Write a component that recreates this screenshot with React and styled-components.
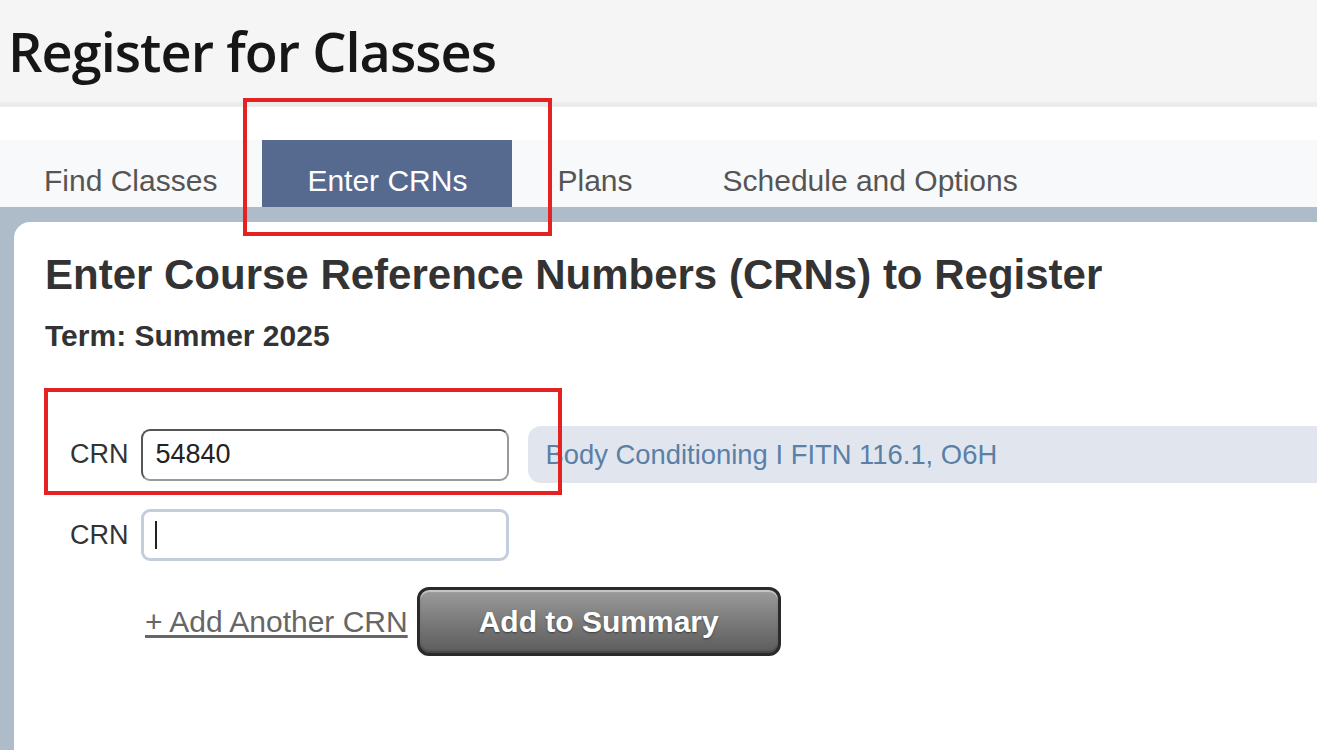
import React from 'react';
import styled, { createGlobalStyle } from 'styled-components';

const GlobalStyle = createGlobalStyle`
  html, body {
    margin: 0;
    padding: 0;
    height: 100%;
  }
  body {
    font-family: "Liberation Sans", Arial, sans-serif;
    background: #ffffff;
    overflow: hidden;
  }
  #root {
    min-height: 100%;
  }
`;

const tabs = ['Find Classes', 'Enter CRNs', 'Plans', 'Schedule and Options'];

export default function App() {
  return (
    <Page>
      <GlobalStyle />
      <Header>
        <Title>Register for Classes</Title>
      </Header>
      <Spacer />
      <TabBar>
        {tabs.map((t) => (
          <Tab key={t} $active={t === 'Enter CRNs'}>{t}</Tab>
        ))}
      </TabBar>
      <Main>
        <Panel>
          <Heading>Enter Course Reference Numbers (CRNs) to Register</Heading>
          <Term>Term: Summer 2025</Term>

          <CrnRow $first>
            <Label>CRN</Label>
            <CrnInput defaultValue="54840" />
            <CourseInfo>Body Conditioning I FITN 116.1, O6H</CourseInfo>
          </CrnRow>
          <CrnRow>
            <Label>CRN</Label>
            <InputWrap>
              <CrnInput $focused defaultValue="" />
              <Caret />
            </InputWrap>
          </CrnRow>

          <Actions>
            <AddLink href="#">+ Add Another CRN</AddLink>
            <SummaryButton>Add to Summary</SummaryButton>
          </Actions>
        </Panel>
      </Main>

      <Highlight style={{ left: 243, top: 98, width: 309, height: 138 }} />
      <Highlight style={{ left: 44, top: 388, width: 518, height: 107 }} />
    </Page>
  );
}

const Page = styled.div`
  position: relative;
  min-height: 100vh;
  display: flex;
  flex-direction: column;
`;

const Header = styled.header`
  height: 102px;
  background: #f5f5f5;
  border-bottom: 5px solid #ececec;
  display: flex;
  align-items: center;
  padding-left: 8px;
`;

const Title = styled.h1`
  margin: 0;
  font-family: "Open Sans", "Noto Sans", sans-serif;
  font-weight: 600;
  font-size: 54px;
  letter-spacing: -0.95px;
  line-height: normal;
  color: #161616;
`;

const Spacer = styled.div`
  height: 33px;
  background: #ffffff;
`;

const TabBar = styled.nav`
  display: flex;
  height: 67px;
  background: #f8f9fb;
`;

const Tab = styled.div`
  box-sizing: border-box;
  height: 67px;
  padding: 24px 45px 0;
  font-size: 30px;
  line-height: 34px;
  white-space: nowrap;
  color: ${(p) => (p.$active ? '#ffffff' : '#555555')};
  background: ${(p) => (p.$active ? '#566a8f' : 'transparent')};

  &:first-child {
    padding-left: 44px;
  }
`;

const Main = styled.main`
  flex: 1;
  display: flex;
  background: #aebbc9;
  padding: 15px 0 0 14px;
`;

const Panel = styled.section`
  flex: 1;
  background: #ffffff;
  border-top-left-radius: 16px;
  padding: 29px 0 0 31px;
`;

const Heading = styled.h2`
  margin: 0;
  font-size: 42px;
  font-weight: 700;
  line-height: 48px;
  color: #333333;
  white-space: nowrap;
`;

const Term = styled.h3`
  margin: 20px 0 0;
  font-size: 30px;
  font-weight: 700;
  line-height: 34px;
  color: #333333;
`;

const CrnRow = styled.div`
  display: flex;
  align-items: center;
  margin-top: ${(p) => (p.$first ? '73px' : '26px')};
  padding-left: 25px;
  min-height: 52px;
`;

const Label = styled.span`
  font-size: 27px;
  color: #333333;
  margin-right: 12px;
`;

const InputWrap = styled.div`
  position: relative;
  display: flex;
`;

const CrnInput = styled.input`
  box-sizing: border-box;
  width: 368px;
  height: 52px;
  padding: 0 13px;
  font-family: "Liberation Sans", Arial, sans-serif;
  font-size: 27px;
  color: #222222;
  background: #ffffff;
  border-radius: 9px;
  outline: none;
  border: ${(p) => (p.$focused ? '3px solid #c3cddb' : '2px solid')};
  border-color: ${(p) => (p.$focused ? '#c3cddb' : '#555555 #9a9a9a #9a9a9a #555555')};
`;

const Caret = styled.span`
  position: absolute;
  left: 14px;
  top: 12px;
  width: 2px;
  height: 28px;
  background: #222222;
`;

const CourseInfo = styled.div`
  flex: 1;
  margin-left: 19px;
  height: 57px;
  display: flex;
  align-items: center;
  padding-left: 18px;
  background: #e1e6ee;
  border-radius: 13px 0 0 13px;
  font-size: 27.4px;
  color: #5a80a8;
  white-space: nowrap;
`;

const Actions = styled.div`
  display: flex;
  align-items: center;
  margin-top: 26px;
  padding-left: 100px;
`;

const AddLink = styled.a`
  font-size: 30px;
  color: #666666;
  text-decoration: underline;
  text-underline-offset: 3px;
  margin-right: 9px;
`;

const SummaryButton = styled.button`
  box-sizing: border-box;
  width: 364px;
  height: 69px;
  border: 3px solid #2a2a2a;
  border-radius: 12px;
  background: linear-gradient(#9c9c9c 0%, #7a7a7a 50%, #5c5c5c 100%);
  box-shadow: inset 0 2px 1px rgba(255, 255, 255, 0.45), inset 0 -2px 2px rgba(0, 0, 0, 0.25);
  font-family: "Liberation Sans", Arial, sans-serif;
  font-size: 30px;
  font-weight: 700;
  color: #ffffff;
  text-shadow: 0 1px 2px rgba(0, 0, 0, 0.45);
  cursor: pointer;
`;

const Highlight = styled.div`
  position: absolute;
  box-sizing: border-box;
  border: 4px solid #e42222;
  pointer-events: none;
`;
